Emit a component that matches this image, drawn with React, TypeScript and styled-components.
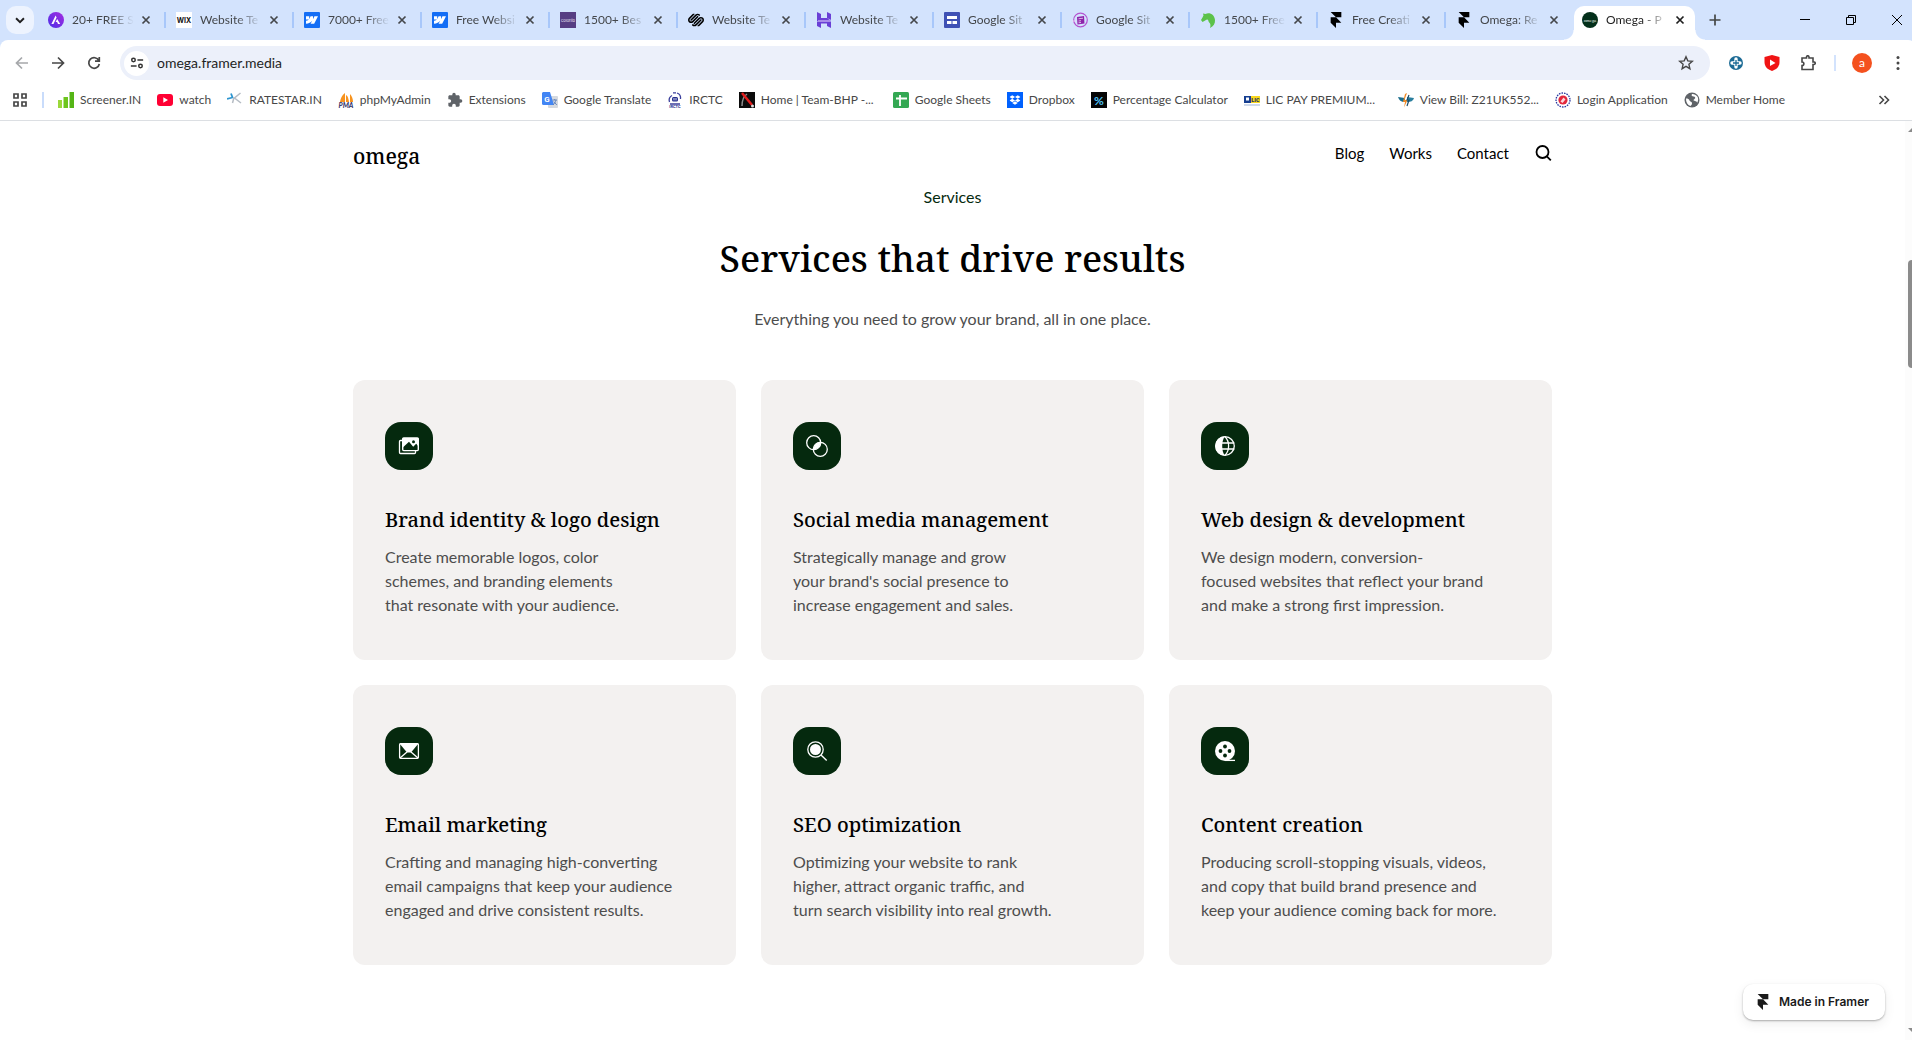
import React from "react";
import styled, { createGlobalStyle } from "styled-components";
import { SiFramer, SiSquarespace, SiWebflow } from "react-icons/si";
import { FaDropbox } from "react-icons/fa";
import { MdExtension } from "react-icons/md";

const uiFont = `Lato, "Open Sans", sans-serif`;
const serifFont = `"Noto Serif", "DejaVu Serif Condensed", "Liberation Serif", serif`;

const GlobalStyle = createGlobalStyle`
  *, *::before, *::after { box-sizing: border-box; }
  body { margin: 0; background: #fff; font-family: ${uiFont}; }
  h1, h2, p, ul { margin: 0; padding: 0; }
  ul { list-style: none; }
  a { color: inherit; text-decoration: none; }
  button { border: 0; padding: 0; background: none; color: inherit; font: inherit; }
  svg { display: block; flex: none; }
`;

const Shell = styled.div`
  display: flex;
  flex-direction: column;
  min-height: 100vh;
`;

/* ---------- tab strip ---------- */

const TabStrip = styled.div`
  display: flex;
  height: 40px;
  padding-left: 6px;
  background: #d3e3fd;
  overflow: hidden;
`;

const TabSearch = styled.button`
  display: grid;
  place-items: center;
  width: 28px;
  height: 28px;
  margin: 6px 4px 0 0;
  border-radius: 10px;
  background: #edf3fe;
  color: #1f1f1f;
`;

const Tabs = styled.ul`
  display: flex;
  padding-top: 6px;
`;

const Tab = styled.li<{ $active?: boolean; $divided?: boolean }>`
  position: relative;
  display: flex;
  align-items: center;
  width: ${(p) => (p.$active ? 121 : 128)}px;
  height: 34px;
  padding: 0 6px 6px ${(p) => (p.$active ? 8 : 10)}px;
  border-radius: 10px 10px 0 0;
  background: ${(p) => (p.$active ? "#fff" : "transparent")};
  color: ${(p) => (p.$active ? "#1f1f1f" : "#44474b")};

  &::after {
    content: "";
    display: ${(p) => (p.$divided ? "block" : "none")};
    position: absolute;
    right: 0;
    top: 6px;
    width: 2px;
    height: 16px;
    background: #a8c7fa;
  }
`;

const TabFoot = styled.span<{ $side: "left" | "right" }>`
  position: absolute;
  bottom: 0;
  ${(p) => p.$side}: -10px;
  width: 10px;
  height: 10px;
  background: radial-gradient(circle at ${(p) => (p.$side === "left" ? "0 0" : "100% 0")}, transparent 9px, #fff 10px);
`;

const TabLink = styled.a`
  display: flex;
  flex: none;
  align-items: center;
  gap: 8px;
  width: 90px;
  font-size: 12px;
  line-height: 16px;
`;

const TabTitle = styled.span`
  flex: 1;
  white-space: nowrap;
  mask-image: linear-gradient(to right, #000 36px, transparent 62px);
`;

const TabClose = styled.button`
  display: grid;
  flex: none;
  place-items: center;
  width: 16px;
  height: 16px;
`;

const NewTab = styled.button`
  display: grid;
  place-items: center;
  width: 28px;
  height: 28px;
  margin: 6px auto 0 6px;
  color: #444746;
`;

const WindowControls = styled.div`
  display: flex;
  height: 40px;
  margin-right: -8px;
`;

const WindowButton = styled.button`
  display: grid;
  place-items: center;
  width: 46px;
  color: #000;
`;

/* ---------- address row ---------- */

const AddressWrap = styled.div`
  overflow: hidden;
  background: #d3e3fd;
`;

const AddressRow = styled.form`
  display: flex;
  align-items: center;
  height: 40px;
  margin-right: -4px;
  padding: 6px 0 0 4px;
  border-radius: 8px 8px 0 0;
  background: #fff;
  color: #474747;
`;

const ToolButton = styled.button<{ $w?: number; $muted?: boolean }>`
  display: grid;
  place-items: center;
  flex: none;
  width: ${(p) => p.$w ?? 36}px;
  height: 34px;
  color: ${(p) => (p.$muted ? "#a6a8ab" : "#474747")};
`;

const Omnibox = styled.div`
  display: flex;
  align-items: center;
  flex: 1;
  height: 34px;
  margin: 0 8px;
  padding: 0 12px 0 4px;
  border-radius: 17px;
  background: #ecf0fa;
`;

const SiteInfo = styled.button`
  display: grid;
  place-items: center;
  width: 25px;
  height: 25px;
  border-radius: 50%;
  background: #fff;
  color: #333;
`;

const UrlInput = styled.input`
  flex: 1;
  min-width: 0;
  height: 24px;
  padding: 0 8px;
  border: 0;
  outline: 0;
  background: transparent;
  color: #1f1f1f;
  font: 14px/24px ${uiFont};
`;

const ToolDivider = styled.span`
  width: 2px;
  height: 16px;
  margin: 0 8px;
  background: #d3e3fd;
`;

const Avatar = styled.span`
  display: grid;
  place-items: center;
  width: 20px;
  height: 20px;
  border-radius: 50%;
  background: #f4511e;
  color: #fff;
  font-size: 12px;
  line-height: 20px;
`;

/* ---------- bookmarks ---------- */

const BookmarkBar = styled.nav`
  display: flex;
  align-items: center;
  height: 41px;
  padding: 0 16px 0 12px;
  border-bottom: 1px solid #dcdfe3;
  color: #474747;
`;

const AppsButton = styled.button`
  width: 16px;
  height: 16px;
`;

const BarDivider = styled.span`
  width: 2px;
  height: 16px;
  margin: 0 14px;
  background: #c9dcfb;
`;

const BookmarkList = styled.ul`
  display: flex;
  gap: 16px;
`;

const BookmarkLink = styled.a<{ $capped?: boolean }>`
  display: flex;
  align-items: center;
  gap: 6px;
  min-width: ${(p) => (p.$capped ? "138px" : "0")};
  font-size: 12px;
  line-height: 16px;
  white-space: nowrap;
`;

const MoreBookmarks = styled.button`
  display: grid;
  place-items: center;
  width: 24px;
  height: 24px;
  margin-left: auto;
`;

/* ---------- page ---------- */

const Viewport = styled.div`
  display: flex;
  flex: 1;
`;

const Page = styled.div`
  position: relative;
  flex: 1;
`;

const Header = styled.header`
  display: flex;
  align-items: center;
  justify-content: space-between;
  max-width: 1199px;
  height: 64px;
  margin: 0 auto;
  color: #000;
`;

const Brand = styled.a`
  padding-top: 6px;
  font: 500 21px/32px ${serifFont};
`;

const SiteNav = styled.nav`
  display: flex;
  align-items: center;
  gap: 25px;
  font-size: 15px;
  line-height: 24px;
`;

const Services = styled.main`
  max-width: 1199px;
  margin: 0 auto;
  padding-bottom: 75px;
`;

const Intro = styled.div`
  display: flex;
  flex-direction: column;
  align-items: center;
  gap: 24px;
  padding-bottom: 49px;
  text-align: center;
`;

const Eyebrow = styled.p`
  color: #052a0e;
  font-size: 16px;
  line-height: 24px;
`;

const Title = styled.h1`
  color: #000;
  font: 500 37px/50px ${serifFont};
`;

const Copy = styled.p`
  color: #4d4d4d;
  font-size: 16px;
  line-height: 24px;
`;

const CardGrid = styled.ul`
  display: grid;
  grid-template-columns: repeat(3, 1fr);
  gap: 25px;
`;

const Card = styled.li`
  display: flex;
  flex-direction: column;
  align-items: flex-start;
  padding: 42px 32px 43px;
  border-radius: 12px;
  background: #f3f1f0;
`;

const CardIcon = styled.span`
  width: 48px;
  height: 48px;
  margin-bottom: 35px;
  border-radius: 16px;
  background: #05290e;
  color: #fff;
`;

const CardTitle = styled.h2`
  margin-bottom: 10px;
  color: #000;
  font: 500 20px/30px ${serifFont};
`;

const FramerBadge = styled.a`
  position: absolute;
  right: 20px;
  bottom: 20px;
  display: flex;
  align-items: center;
  gap: 8px;
  height: 36px;
  padding: 0 16px 0 12px;
  border-radius: 10px;
  background: #fff;
  box-shadow: 0 1px 2px rgba(0, 0, 0, 0.3), 0 4px 12px rgba(0, 0, 0, 0.07);
  color: #1a1a1a;
  font: 600 12px/16px Inter, sans-serif;
`;

const ScrollTrack = styled.div`
  display: flex;
  flex-direction: column;
  align-items: flex-end;
  width: 7px;
  padding: 7px 0 8px;
  background: #fcfcfc;
  overflow: hidden;
`;

const ScrollThumb = styled.span`
  width: 4px;
  height: 108px;
  margin: 128px 0 auto;
  border-radius: 4px 0 0 4px;
  background: #8b8b8b;
`;

const ScrollArrow = styled.span<{ $down?: boolean }>`
  width: 4px;
  height: 4px;
  background: #8b8b8b;
  clip-path: ${(p) => (p.$down ? "polygon(0 0, 100% 0, 100% 100%)" : "polygon(0 100%, 100% 0, 100% 100%)")};
`;

/* ---------- drawings ---------- */

const Svg = ({ children, s = 16, box = 16 }: { children: React.ReactNode; s?: number; box?: number }) => (
  <svg width={s} height={s} viewBox={`0 0 ${box} ${box}`} fill="none" aria-hidden="true">
    {children}
  </svg>
);

const Cross = () => (
  <Svg>
    <path d="M4.500 4.500l7 7M11.500 4.500l-7 7" stroke="currentColor" strokeWidth="1.700" />
  </Svg>
);

const Webflow = () => (
  <Svg>
    <rect width="16" height="16" rx="1" fill="#146ef5" />
    <SiWebflow x="2" y="2" size={12} color="#fff" />
  </Svg>
);

const AstraMark = () => (
  <Svg>
    <defs>
      <linearGradient id="astra" x1="0" y1="1" x2="1" y2="0">
        <stop offset="0" stopColor="#4b2fe8" />
        <stop offset="1" stopColor="#a62be0" />
      </linearGradient>
    </defs>
    <circle cx="8" cy="8" r="8" fill="url(#astra)" />
    <path d="M7.600 3.600L3.400 12h2.100l3.100-6.400zM9.200 7l-1.600 3h1.500l.9 2h2.200z" fill="#fff" />
  </Svg>
);

const WixMark = () => (
  <Svg>
    <rect width="16" height="16" fill="#fff" />
    <text x="8" y="10.500" textAnchor="middle" fontFamily="Inter, sans-serif" fontWeight="700" fontSize="7" fill="#111">WIX</text>
  </Svg>
);

const ColorlibMark = () => (
  <Svg>
    <rect width="16" height="16" fill="#563d83" />
    <text x="8" y="9.500" textAnchor="middle" fontFamily="Inter, sans-serif" fontSize="4" fill="#ece6f6">colorlib</text>
  </Svg>
);

const HMark = () => (
  <Svg>
    <path d="M1 0l4 2v4h6l4 3H1zM11 0l4 2v6l-4-2zM1 9.500h14V16l-4-2v-2.500H5V16l-4-2z" fill="#6a3fd6" />
    <path d="M2 8h12v2H2z" fill="#a88bea" />
  </Svg>
);

const SitesMark = () => (
  <Svg>
    <rect width="16" height="16" rx="1" fill="#3f51b5" />
    <path d="M3 4h10v3H3zM3 9h4.500v3H3zM8.500 9H13v3H8.500z" fill="#fff" />
  </Svg>
);

const PaperMark = () => (
  <Svg>
    <circle cx="8.500" cy="8" r="6.800" stroke="#b453d0" strokeWidth="1.200" />
    <path d="M5 5l7-1 .5 7.500-7 1z" fill="#8e24aa" />
    <path d="M6.500 6.800l4.500-.6M6.500 9l2.500-.3M6.500 10.800l2.500-.3M0 9h4" stroke="#f3d9fa" strokeWidth=".8" />
  </Svg>
);

const HorseMark = () => (
  <Svg>
    <path d="M3 1.500L5.500 2C10 0 14.500 3 15 8c.3 3.500-1.500 6.500-5 8 .8-2.500.6-4.300-.8-5.500C8.300 9.500 8.500 8 7.500 7.500 6 7.500 4.500 9 2.500 10L1 8c1-1.500 1.800-3 2.500-4.500z" fill="#5cc24a" />
  </Svg>
);

const OmegaMark = () => (
  <Svg>
    <circle cx="8" cy="8" r="8" fill="#04301b" />
    <text x="8" y="9.500" textAnchor="middle" fontFamily="Noto Serif, serif" fontSize="4" fill="#e8efe9">omega</text>
  </Svg>
);

const ScreenerMark = () => (
  <Svg>
    <path d="M0 8h4v8H0z" fill="#9ad83a" />
    <path d="M5.500 5h4.500v11H5.500z" fill="#6cc51d" />
    <path d="M11.500 0H16v16h-4.500z" fill="#55b516" />
  </Svg>
);

const YouTubeMark = () => (
  <Svg>
    <rect y="2" width="16" height="12" rx="3" fill="#ff0033" />
    <path d="M6.300 5.300L11 8l-4.700 2.700z" fill="#fff" />
  </Svg>
);

const RatestarMark = () => (
  <Svg>
    <path d="M0 7l5.500-1.500L4 1.500" stroke="#2f96d0" strokeWidth="1.800" />
    <path d="M13.500 1L7.500 6l6.500 5M7 5.500L5.500 11" stroke="#b5bcc4" strokeWidth="1.500" />
  </Svg>
);

const PmaMark = () => (
  <Svg>
    <path d="M7 10V1c-3 2-4.500 5.500-5 9zM8 10V3c2 1 2.500 4 3 7zM12 10V2c2 2 3 5 3 8z" fill="#f7931e" />
    <text x="8" y="16" textAnchor="middle" fontFamily="Lato, sans-serif" fontWeight="900" fontStyle="italic" fontSize="7" fill="#3a3a6e">PMA</text>
  </Svg>
);

const TranslateMark = () => (
  <Svg>
    <rect x="6" y="4" width="10" height="12" rx="1" fill="#d5d9df" />
    <path d="M1 0h7l4 13H1.500A1.500 1.500 0 0 1 0 11.500V1z" fill="#4285f4" />
    <text x="5" y="9.500" textAnchor="middle" fontFamily="Roboto, sans-serif" fontWeight="700" fontSize="8" fill="#fff">G</text>
    <path d="M10.500 8h4.500M12.700 7v1M14 8c-.5 2-1.500 3.500-3 5M11.800 9.500l3 3.500" stroke="#5f7fb8" strokeWidth=".9" />
  </Svg>
);

const IrctcMark = () => (
  <Svg>
    <path d="M5 3.500A5.500 5.500 0 0 0 2.500 10M10 1a5.500 5.500 0 0 1 3.500 6M3 12h10M6 .8h3" stroke="#3b3f9c" strokeWidth="1.300" />
    <rect x="5" y="5" width="6" height="4.500" rx="1.500" fill="#27308f" />
    <path d="M7 6v2.400M9 6v2.400" stroke="#fff" strokeWidth=".8" />
    <text x="8" y="16" textAnchor="middle" fontFamily="Roboto, sans-serif" fontWeight="700" fontSize="4" fill="#27308f">IRCTC</text>
  </Svg>
);

const BhpMark = () => (
  <Svg>
    <rect width="16" height="16" fill="#0b0b0b" />
    <path d="M3 14c0-6 2-10 5-12" stroke="#8d8d8d" strokeWidth="1.500" />
    <path d="M3 1l10 12" stroke="#e21b1b" strokeWidth="2.500" />
    <circle cx="13.500" cy="14" r="1.500" fill="#ddd" />
  </Svg>
);

const SheetsMark = () => (
  <Svg>
    <rect width="16" height="16" rx="1.500" fill="#34a853" />
    <path d="M7 3v11M3 6.500h11" stroke="#fff" strokeWidth="1.800" />
  </Svg>
);

const DropboxMark = () => (
  <Svg>
    <rect width="16" height="16" fill="#0061fe" />
    <FaDropbox x="2.500" y="2.500" size={11} color="#fff" />
  </Svg>
);

const PercentMark = () => (
  <Svg>
    <rect width="16" height="16" fill="#050505" />
    <text x="8" y="12.500" textAnchor="middle" fontFamily="Lato, sans-serif" fontWeight="700" fontSize="12" fill="#4fc3f7">%</text>
  </Svg>
);

const LicMark = () => (
  <Svg>
    <rect y="4" width="7" height="7" fill="#153e90" />
    <rect x="7" y="4" width="9" height="7" fill="#f9d71c" />
    <rect x="2" y="5.500" width="3" height="3" fill="#fff" />
    <text x="11.500" y="10" textAnchor="middle" fontFamily="Roboto, sans-serif" fontWeight="900" fontSize="5.500" fill="#1c3264">LIC</text>
    <path d="M0 13h16" stroke="#9fb4d6" />
  </Svg>
);

const BillMark = () => (
  <Svg>
    <path d="M0 5l7 1v4c-4 0-6-2-7-5z" fill="#1b6d8c" />
    <path d="M16 6L9 5v5c4 0 6-1 7-4z" fill="#2a7f9e" />
    <path d="M9 1L6.500 8h3L6 15.500 7 10H5L7 2z" fill="#f28c28" />
    <path d="M11 3L9 8h2l-2 6" stroke="#1b4d6c" strokeWidth="1.200" />
  </Svg>
);

const LoginMark = () => (
  <Svg>
    <circle cx="8" cy="8" r="7" stroke="#2b3aa0" strokeWidth="1.300" strokeDasharray="1.600 1" />
    <circle cx="8" cy="8" r="4.600" fill="#e2283c" />
    <path d="M5.500 9.500l3-4 2 2-3 3.500z" fill="#fbd7db" />
  </Svg>
);

const GlobeMark = () => (
  <Svg>
    <circle cx="8" cy="8" r="7.500" fill="#5f6368" />
    <path d="M2 6.500c2 0 3 .5 3.500 2S8 9.500 8 11s-.5 2-1.500 3C3.500 13 1.800 10 2 6.500zM8 2c-1 1.500 0 2.500 1.500 2.500S12 6 10.500 7 9 8.500 11 9s2 1 2 2c1.500-2 1.500-5 .3-6.500C12 3 10 1.800 8 2z" fill="#fff" />
  </Svg>
);

const Arrow = ({ forward }: { forward?: boolean }) => (
  <Svg>
    <path
      d={forward ? "M2 8h11M8 2.500L13.500 8 8 13.500" : "M14 8H3M8 2.500L2.500 8 8 13.500"}
      stroke="currentColor"
      strokeWidth="1.700"
    />
  </Svg>
);

const GalleryIcon = () => (
  <Svg s={48} box={48}>
    <path d="M17 18.500h-1.500a1 1 0 0 0-1 1v11a1 1 0 0 0 1 1h14a1 1 0 0 0 1-1V29" stroke="#fff" strokeWidth="1.300" />
    <rect x="17.700" y="16" width="15.600" height="12.600" rx="1" stroke="#fff" strokeWidth="1.400" />
    <path d="M17.500 16h16v8.500l-2.300-2.800-3 3-4.200-5-6.500 6z" fill="#fff" />
    <circle cx="28.500" cy="19.700" r="1.500" fill="#05290e" />
  </Svg>
);

const CirclesIcon = () => (
  <Svg s={48} box={48}>
    <circle cx="20.700" cy="20.700" r="7" stroke="#fff" strokeWidth="1.300" />
    <circle cx="27.300" cy="27.300" r="7" stroke="#fff" strokeWidth="1.300" />
    <path d="M27.600 20.300a7 7 0 0 1-7.200 7.300 7 7 0 0 1 7.200-7.300z" fill="#fff" />
  </Svg>
);

const WebIcon = () => (
  <Svg s={48} box={48}>
    <circle cx="24" cy="24" r="9.300" stroke="#fff" strokeWidth="1.300" />
    <path d="M24 14.200a9.800 9.800 0 0 0 0 19.600c-2-2.500-2.800-6-2.800-9.800s.8-7.300 2.800-9.800z" fill="#fff" />
    <path d="M24 14.700c2.500 2.500 3.600 5.800 3.600 9.300s-1.100 6.800-3.600 9.300M21 21h12.300M21 27h12.300" stroke="#fff" strokeWidth="1.300" />
  </Svg>
);

const MailIcon = () => (
  <Svg s={48} box={48}>
    <rect x="14.600" y="16.700" width="18.800" height="14.600" rx="1" stroke="#fff" strokeWidth="1.300" />
    <path d="M14.500 16.500h19L26 25.500h-4z" fill="#fff" />
    <path d="M15 31l7-6M33 31l-7-6" stroke="#fff" strokeWidth="1.300" />
  </Svg>
);

const SeoIcon = () => (
  <Svg s={48} box={48}>
    <circle cx="22.500" cy="22.500" r="7.700" stroke="#fff" strokeWidth="1.300" />
    <circle cx="22.500" cy="22.500" r="5.500" fill="#fff" />
    <path d="M28 28l5.700 5.500" stroke="#fff" strokeWidth="1.400" />
  </Svg>
);

const ReelIcon = () => (
  <Svg s={48} box={48}>
    <circle cx="24" cy="24" r="10" fill="#fff" />
    <path d="M24 33.400h10" stroke="#fff" strokeWidth="1.300" />
    {[[24, 19.5], [24, 28.5], [19.5, 24], [28.5, 24]].map(([x, y]) => (
      <circle key={`${x}-${y}`} cx={x} cy={y} r="1.900" fill="#05290e" />
    ))}
  </Svg>
);

/* ---------- data ---------- */

const tabs = [
  { title: "20+ FREE S", icon: <AstraMark /> },
  { title: "Website Te", icon: <WixMark /> },
  { title: "7000+ Free", icon: <Webflow /> },
  { title: "Free Websi", icon: <Webflow /> },
  { title: "1500+ Bes", icon: <ColorlibMark /> },
  { title: "Website Te", icon: <SiSquarespace size={16} color="#000" /> },
  { title: "Website Te", icon: <HMark /> },
  { title: "Google Sit", icon: <SitesMark /> },
  { title: "Google Sit", icon: <PaperMark /> },
  { title: "1500+ Free", icon: <HorseMark /> },
  { title: "Free Creati", icon: <SiFramer size={16} color="#000" /> },
  { title: "Omega: Re", icon: <SiFramer size={16} color="#000" /> },
  { title: "Omega - P", icon: <OmegaMark /> },
];

const bookmarks: { label: string; icon: React.ReactNode; capped?: boolean }[] = [
  { label: "Screener.IN", icon: <ScreenerMark /> },
  { label: "watch", icon: <YouTubeMark /> },
  { label: "RATESTAR.IN", icon: <RatestarMark /> },
  { label: "phpMyAdmin", icon: <PmaMark /> },
  { label: "Extensions", icon: <MdExtension size={16} color="#5f6368" /> },
  { label: "Google Translate", icon: <TranslateMark /> },
  { label: "IRCTC", icon: <IrctcMark /> },
  { label: "Home | Team-BHP -...", icon: <BhpMark />, capped: true },
  { label: "Google Sheets", icon: <SheetsMark /> },
  { label: "Dropbox", icon: <DropboxMark /> },
  { label: "Percentage Calculator", icon: <PercentMark /> },
  { label: "LIC PAY PREMIUM...", icon: <LicMark />, capped: true },
  { label: "View Bill: Z21UK552...", icon: <BillMark />, capped: true },
  { label: "Login Application", icon: <LoginMark /> },
  { label: "Member Home", icon: <GlobeMark /> },
];

const services = [
  {
    title: "Brand identity & logo design",
    icon: <GalleryIcon />,
    lines: ["Create memorable logos, color", "schemes, and branding elements", "that resonate with your audience."],
  },
  {
    title: "Social media management",
    icon: <CirclesIcon />,
    lines: ["Strategically manage and grow", "your brand's social presence to", "increase engagement and sales."],
  },
  {
    title: "Web design & development",
    icon: <WebIcon />,
    lines: ["We design modern, conversion-", "focused websites that reflect your brand", "and make a strong first impression."],
  },
  {
    title: "Email marketing",
    icon: <MailIcon />,
    lines: ["Crafting and managing high-converting", "email campaigns that keep your audience", "engaged and drive consistent results."],
  },
  {
    title: "SEO optimization",
    icon: <SeoIcon />,
    lines: ["Optimizing your website to rank", "higher, attract organic traffic, and", "turn search visibility into real growth."],
  },
  {
    title: "Content creation",
    icon: <ReelIcon />,
    lines: ["Producing scroll-stopping visuals, videos,", "and copy that build brand presence and", "keep your audience coming back for more."],
  },
];

/* ---------- app ---------- */

function BrowserTabs() {
  const last = tabs.length - 1;
  return (
    <TabStrip>
      <TabSearch aria-label="Search tabs">
        <Svg s={14}>
          <path d="M3.500 6L8 10.500 12.500 6" stroke="currentColor" strokeWidth="2.200" />
        </Svg>
      </TabSearch>
      <Tabs>
        {tabs.map((tab, i) => (
          <Tab key={i} $active={i === last} $divided={i < last - 1}>
            {i === last && <TabFoot $side="left" />}
            <TabLink href="#">
              {tab.icon}
              <TabTitle>{tab.title}</TabTitle>
            </TabLink>
            <TabClose aria-label="Close tab">
              <Cross />
            </TabClose>
            {i === last && <TabFoot $side="right" />}
          </Tab>
        ))}
      </Tabs>
      <NewTab aria-label="New tab">
        <Svg>
          <path d="M8 2.500v11M2.500 8h11" stroke="currentColor" strokeWidth="1.700" />
        </Svg>
      </NewTab>
      <WindowControls>
        <WindowButton aria-label="Minimize">
          <Svg>
            <path d="M3 7.500h10" stroke="currentColor" />
          </Svg>
        </WindowButton>
        <WindowButton aria-label="Restore">
          <Svg>
            <path d="M3.500 5.500h7v7h-7zM5.500 5.500v-2h7v7h-2" stroke="currentColor" />
          </Svg>
        </WindowButton>
        <WindowButton aria-label="Close">
          <Svg>
            <path d="M3 3l10 10M13 3L3 13" stroke="currentColor" />
          </Svg>
        </WindowButton>
      </WindowControls>
    </TabStrip>
  );
}

function AddressBar() {
  return (
    <AddressWrap>
      <AddressRow>
        <ToolButton type="button" aria-label="Back" $muted>
          <Arrow />
        </ToolButton>
        <ToolButton type="button" aria-label="Forward">
          <Arrow forward />
        </ToolButton>
        <ToolButton type="button" aria-label="Reload">
          <Svg>
            <path d="M12.800 5.500A5.300 5.300 0 1 0 13.300 9M13.300 2v4.200H9" stroke="currentColor" strokeWidth="1.700" />
          </Svg>
        </ToolButton>
        <Omnibox>
          <SiteInfo type="button" aria-label="View site information">
            <Svg s={14}>
              <circle cx="4" cy="4.500" r="2" stroke="currentColor" strokeWidth="1.700" />
              <path d="M8.500 4.500H15M1 11.500h6.500" stroke="currentColor" strokeWidth="1.700" />
              <circle cx="12" cy="11.500" r="2" stroke="currentColor" strokeWidth="1.700" />
            </Svg>
          </SiteInfo>
          <UrlInput aria-label="Address" defaultValue="omega.framer.media" />
          <ToolButton type="button" aria-label="Bookmark this page" $w={24}>
            <Svg>
              <path d="M8 1.800l1.800 4.100 4.500.4-3.400 3 1 4.400L8 11.400l-3.900 2.300 1-4.400-3.400-3 4.500-.4z" stroke="currentColor" strokeWidth="1.400" />
            </Svg>
          </ToolButton>
        </Omnibox>
        <ToolButton type="button" aria-label="Health extension">
          <Svg>
            <circle cx="8" cy="8" r="7" fill="#1c6b95" />
            <path d="M8 4v8M4 8h8" stroke="#fff" strokeWidth="3.400" strokeLinecap="round" />
            <path d="M8 5v6M5 8h6" stroke="#1c6b95" strokeWidth="1.300" />
          </Svg>
        </ToolButton>
        <ToolButton type="button" aria-label="Video blocker">
          <Svg>
            <path d="M8 0l7.500 2v5c0 4.500-3 7.500-7.500 9C3.500 14.500.5 11.500.5 7V2z" fill="#f01414" />
            <path d="M6 4.500L11.500 8 6 11z" fill="#fff" />
          </Svg>
        </ToolButton>
        <ToolButton type="button" aria-label="Extensions">
          <Svg>
            <path d="M2 3h4.500V2a1 1 0 0 1 2.500 0v1h4v4h1a1.200 1.200 0 0 1 0 2.500h-1v5H2v-4c2.500 0 2.500-3.500 0-3.500z" stroke="currentColor" strokeWidth="1.600" />
          </Svg>
        </ToolButton>
        <ToolDivider />
        <ToolButton type="button" aria-label="Profile">
          <Avatar>a</Avatar>
        </ToolButton>
        <ToolButton type="button" aria-label="Menu">
          <Svg>
            <g fill="currentColor">
              <circle cx="8" cy="2.500" r="1.500" />
              <circle cx="8" cy="8" r="1.500" />
              <circle cx="8" cy="13.500" r="1.500" />
            </g>
          </Svg>
        </ToolButton>
      </AddressRow>
    </AddressWrap>
  );
}

function Bookmarks() {
  return (
    <BookmarkBar aria-label="Bookmarks">
      <AppsButton aria-label="Apps">
        <Svg>
          <path d="M2 2h4v4H2zM10 2h4v4h-4zM2 10h4v4H2zM10 10h4v4h-4z" stroke="currentColor" strokeWidth="1.700" />
        </Svg>
      </AppsButton>
      <BarDivider />
      <BookmarkList>
        {bookmarks.map((b) => (
          <li key={b.label}>
            <BookmarkLink href="#" $capped={b.capped}>
              {b.icon}
              {b.label}
            </BookmarkLink>
          </li>
        ))}
      </BookmarkList>
      <MoreBookmarks aria-label="More bookmarks">
        <Svg>
          <path d="M3.500 4l4 4-4 4M8.500 4l4 4-4 4" stroke="currentColor" strokeWidth="1.600" />
        </Svg>
      </MoreBookmarks>
    </BookmarkBar>
  );
}

export default function App() {
  return (
    <>
      <GlobalStyle />
      <Shell>
        <BrowserTabs />
        <AddressBar />
        <Bookmarks />
        <Viewport>
          <Page>
            <Header>
              <Brand href="#">omega</Brand>
              <SiteNav aria-label="Site">
                <a href="#">Blog</a>
                <a href="#">Works</a>
                <a href="#">Contact</a>
                <button aria-label="Search">
                  <Svg s={18} box={18}>
                    <circle cx="8.500" cy="8" r="6" stroke="#000" strokeWidth="1.800" />
                    <path d="M12.800 12.300l4 4" stroke="#000" strokeWidth="1.800" />
                  </Svg>
                </button>
              </SiteNav>
            </Header>
            <Services>
              <Intro>
                <Eyebrow>Services</Eyebrow>
                <Title>Services that drive results</Title>
                <Copy>Everything you need to grow your brand, all in one place.</Copy>
              </Intro>
              <CardGrid>
                {services.map((s) => (
                  <Card key={s.title}>
                    <CardIcon>{s.icon}</CardIcon>
                    <CardTitle>{s.title}</CardTitle>
                    <Copy>
                      {s.lines.map((line, i) => (
                        <React.Fragment key={line}>
                          {i > 0 && <br />}
                          {line}
                        </React.Fragment>
                      ))}
                    </Copy>
                  </Card>
                ))}
              </CardGrid>
            </Services>
            <FramerBadge href="#">
              <SiFramer size={16} />
              Made in Framer
            </FramerBadge>
          </Page>
          <ScrollTrack aria-hidden="true">
            <ScrollArrow />
            <ScrollThumb />
            <ScrollArrow $down />
          </ScrollTrack>
        </Viewport>
      </Shell>
    </>
  );
}
